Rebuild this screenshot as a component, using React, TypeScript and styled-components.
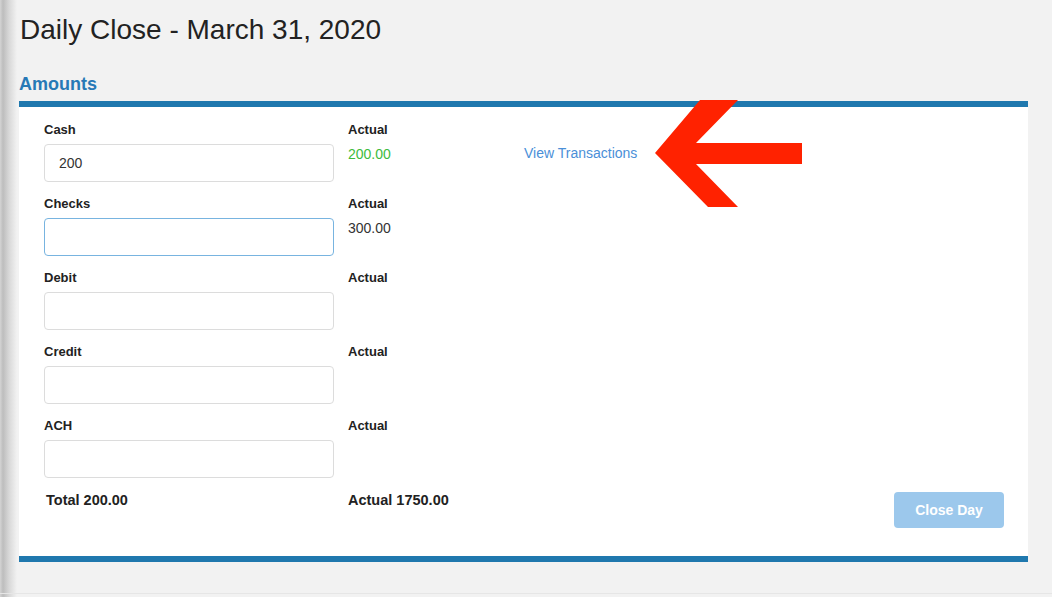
import React from "react";
import styled, { createGlobalStyle } from "styled-components";

const GlobalStyle = createGlobalStyle`
  html, body {
    margin: 0;
    padding: 0;
    min-height: 100%;
  }
  html {
    background: #f2f2f2;
  }
  body {
    min-height: 597px;
    background-color: #f2f2f2;
    background-image: linear-gradient(to right, #d4d4d4 0px, #bdbdbd 3px, #d8d8d8 9px, #f2f2f2 17px);
    background-repeat: no-repeat;
    background-size: 17px 100%;
    font-family: "Liberation Sans", Arial, sans-serif;
    color: #222;
  }
`;

const Page = styled.div`
  position: relative;
  box-sizing: border-box;
  height: 594px;
  padding: 14px 24px 0 19px;
  border-bottom: 1px solid #e6e6e6;
`;

const Title = styled.h1`
  margin: 0 0 0 1px;
  font-size: 28px;
  line-height: 32px;
  font-weight: normal;
  color: #222;
`;

const SectionTitle = styled.h2`
  margin: 27px 0 6px 0;
  font-size: 18px;
  line-height: 22px;
  font-weight: bold;
  color: #2779b6;
`;

const Panel = styled.section`
  background: #fff;
  border-top: 6px solid #1f78ae;
  border-bottom: 6px solid #1f78ae;
  padding: 13px 24px 28px 25px;
`;

const Grid = styled.div`
  display: grid;
  grid-template-columns: 304px 176px 1fr;
`;

const Field = styled.div`
  display: flex;
  flex-direction: column;
  padding-bottom: 12px;
`;

const Label = styled.div`
  font-size: 13px;
  line-height: 20px;
  font-weight: bold;
  color: #222;
  margin-bottom: 4px;
`;

const Input = styled.input<{ $focused?: boolean }>`
  box-sizing: border-box;
  width: 290px;
  height: 38px;
  border: 1px solid ${(p) => (p.$focused ? "#78b4e0" : "#dcdcdc")};
  border-radius: 4px;
  padding: 0 14px;
  font-family: "Liberation Sans", Arial, sans-serif;
  font-size: 14px;
  color: #333;
  background: #fff;
  outline: none;
`;

const Value = styled.div<{ $ok?: boolean }>`
  font-size: 14px;
  line-height: 20px;
  color: ${(p) => (p.$ok ? "#3dbb3d" : "#333")};
`;

const LinkCell = styled.div`
  padding-top: 23px;
`;

const Link = styled.a`
  font-size: 14px;
  line-height: 20px;
  color: #4a8fd8;
  text-decoration: none;
  cursor: pointer;
`;

const Total = styled.div<{ $indent?: boolean }>`
  font-size: 14.5px;
  line-height: 20px;
  font-weight: bold;
  color: #222;
  padding-left: ${(p) => (p.$indent ? "2px" : "0")};
`;

const Actions = styled.div`
  display: flex;
  justify-content: flex-end;
`;

const Button = styled.button`
  margin-top: 2px;
  width: 110px;
  height: 36px;
  border: none;
  border-radius: 4px;
  background: #9cc8ec;
  color: #fff;
  font-family: "Liberation Sans", Arial, sans-serif;
  font-size: 14px;
  font-weight: bold;
`;

const Arrow = styled.svg`
  position: absolute;
  left: 655px;
  top: 99px;
  width: 148px;
  height: 110px;
`;

const rows = [
  { name: "Cash", value: "200", actual: "200.00", ok: true, link: true },
  { name: "Checks", value: "", actual: "300.00", focused: true },
  { name: "Debit", value: "" },
  { name: "Credit", value: "" },
  { name: "ACH", value: "" },
];

export default function App() {
  return (
    <>
      <GlobalStyle />
      <Page>
        <Title>Daily Close - March 31, 2020</Title>
        <SectionTitle>Amounts</SectionTitle>
        <Panel>
          <Grid>
            {rows.map((r) => (
              <React.Fragment key={r.name}>
                <Field>
                  <Label>{r.name}</Label>
                  <Input defaultValue={r.value} $focused={r.focused} />
                </Field>
                <Field>
                  <Label>Actual</Label>
                  {r.actual && <Value $ok={r.ok}>{r.actual}</Value>}
                </Field>
                <LinkCell>{r.link && <Link>View Transactions</Link>}</LinkCell>
              </React.Fragment>
            ))}
            <Total $indent>Total 200.00</Total>
            <Total>Actual 1750.00</Total>
            <Actions>
              <Button>Close Day</Button>
            </Actions>
          </Grid>
        </Panel>
        <Arrow viewBox="0 0 148 110">
          <polygon
            points="0,54 45,1 83,1 41,44 147,44 147,65 41,65 83,108 53,108"
            fill="#ff2200"
          />
        </Arrow>
      </Page>
    </>
  );
}
